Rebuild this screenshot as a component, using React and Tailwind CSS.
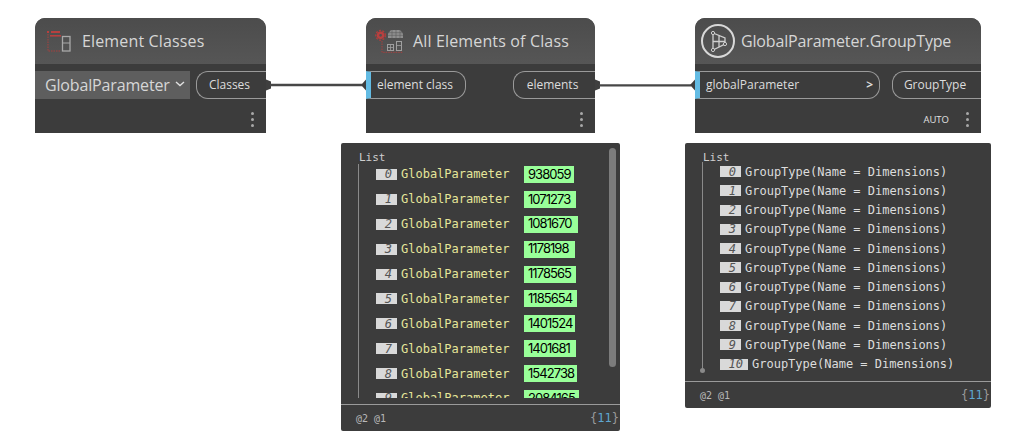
const sans = "font-['Open_Sans','Noto_Sans',sans-serif]";

function Dots({ className }) {
  return (
    <div className={"absolute flex flex-col gap-[3px] " + className}>
      <span className="w-[3px] h-[3px] rounded-full bg-[#a8a8a8]" />
      <span className="w-[3px] h-[3px] rounded-full bg-[#a8a8a8]" />
      <span className="w-[3px] h-[3px] rounded-full bg-[#a8a8a8]" />
    </div>
  );
}

function Header({ icon, title, track }) {
  return (
    <div className="h-[46px] flex items-center rounded-t-[10px] bg-gradient-to-b from-[#4c4c4c] to-[#565656]">
      {icon}
      <span className={"text-[16px] leading-none text-[#d6d6d6] " + track + " " + sans}>{title}</span>
    </div>
  );
}

function OutPort({ label, w }) {
  return (
    <div className={"h-[28px] flex items-center justify-center pr-[4px] rounded-l-[12px] border border-r-0 border-[#9a9a9a] text-[12px] text-[#dcdcdc] " + w + " " + sans}>
      {label}
    </div>
  );
}

function InPort({ label, w, arrow }) {
  return (
    <div className={"h-[28px] flex items-center justify-between border-y border-r border-[#9a9a9a] rounded-r-[12px] border-l-[5px] border-l-[#63bbe3] pl-[6px] pr-[6px] text-[12px] text-[#dcdcdc] " + w + " " + sans}>
      <span className="-mt-[1px]">{label}</span>
      {arrow && <span className="text-[12px] -mt-[1px] font-bold">&gt;</span>}
    </div>
  );
}

function IconClasses() {
  return (
    <svg width="30" height="26" viewBox="0 0 30 26" className="ml-[10px] mr-[7px] shrink-0">
      <g fill="#b8403f">
        <rect x="2" y="3" width="2" height="2" />
        <rect x="6" y="3" width="9" height="2" />
        <rect x="5" y="7" width="11" height="1.6" />
      </g>
      <path d="M3 6V23H16" stroke="#a8403f" strokeWidth="1" strokeDasharray="1.5 1" fill="none" />
      <rect x="17.5" y="8.5" width="7.5" height="14.5" fill="none" stroke="#a8a8a8" strokeWidth="1.3" />
      <path d="M17.5 15H25" stroke="#a8a8a8" strokeWidth="1" />
    </svg>
  );
}

function IconAll() {
  return (
    <svg width="32" height="28" viewBox="0 0 32 28" className="ml-[9px] mr-[6px] shrink-0">
      <circle cx="5.6" cy="8.3" r="2.6" fill="none" stroke="#b8403f" strokeWidth="2.4" />
      <circle cx="5.6" cy="8.3" r="4.8" fill="none" stroke="#b03c3b" strokeWidth="1.4" strokeDasharray="2 1.4" />
      <path d="M7 14V25.3H28" stroke="#a8403f" strokeWidth="1" strokeDasharray="1.5 1" fill="none" />
      <path d="M13 11V6.5L16 3H25L28 6.5V11Z" fill="#8f8f8f" />
      <path d="M13 5.7H28M13 8.3H28M17 3V11M21 3V11M25 3V11" stroke="#5c5c5c" strokeWidth="0.6" />
      <rect x="12.5" y="17.5" width="6" height="6" fill="none" stroke="#a0a0a0" strokeWidth="1" />
      <path d="M15.5 17.5V23.5M12.5 20.5H18.5" stroke="#a0a0a0" strokeWidth="0.8" />
      <rect x="21.5" y="14.5" width="5" height="9" fill="none" stroke="#a0a0a0" strokeWidth="1" />
      <path d="M21.5 18.5H26.5" stroke="#a0a0a0" strokeWidth="0.8" />
    </svg>
  );
}

function IconGlobal() {
  return (
    <svg width="36" height="36" viewBox="0 0 36 36" className="ml-[5px] mr-[5px] shrink-0">
      <circle cx="18" cy="18" r="16" fill="none" stroke="#d8d8d8" strokeWidth="2" />
      <path d="M13 10L25 15V21L13 27ZM19 12.5V24M13 18.5H25" fill="none" stroke="#d0d0d0" strokeWidth="1.3" />
      <circle cx="13" cy="10" r="1.6" fill="#4c4c4c" stroke="#d0d0d0" />
      <circle cx="13" cy="27" r="1.6" fill="#4c4c4c" stroke="#d0d0d0" />
      <circle cx="25" cy="21" r="1.6" fill="#4c4c4c" stroke="#d0d0d0" />
    </svg>
  );
}

function Wires() {
  return (
    <svg width="1016" height="100" className="absolute left-0 top-0" viewBox="0 0 1016 100">
      <g fill="#3f3f3f">
        <path d="M266 79.5L271 81.5V88.5L266 90.5Z" />
        <path d="M595 79.5L600 81.5V88.5L595 90.5Z" />
        <path d="M366 79.5L361 85L366 90.5Z" />
        <path d="M695 79.5L690 85L695 90.5Z" />
      </g>
      <path d="M270 85H362" stroke="#474747" strokeWidth="2.4" />
      <path d="M599 85.4H691" stroke="#474747" strokeWidth="2.4" />
    </svg>
  );
}

function Index({ n, wide }) {
  return (
    <span className={"shrink-0 flex items-center justify-end pr-[5px] h-[11px] bg-[#d9d9d9] text-[#555] italic text-[12px] " + (wide ? "w-[28px]" : "w-[21px]")}>
      {n}
    </span>
  );
}

const ids = ["938059", "1071273", "1081670", "1178198", "1178565", "1185654", "1401524", "1401681", "1542738", "2084165"];
const idWidths = ["w-[50px]", "w-[52px]", "w-[54px]", "w-[51px]", "w-[52px]", "w-[53px]", "w-[51px]", "w-[52px]", "w-[53px]", "w-[55px]"];

function Footer() {
  return (
    <div className="h-[27px] shrink-0 border-t border-[#9a9a9a] flex items-center justify-between pl-[15px] pr-[1px] text-[12px]">
      <span className="text-[10px] text-[#b8b8b8]">@2 @1</span>
      <span className="text-[#9a9a9a]">{"{"}<span className="text-[#5ea6d0]">11</span>{"}"}</span>
    </div>
  );
}

export default function App() {
  return (
    <div className="relative w-[1016px] h-[442px] bg-white overflow-hidden">
      <Wires />

      <div className="absolute left-[35px] top-[18px] w-[231px] h-[115px] bg-[#3c3c3c] rounded-t-[10px]">
        <Header icon={<IconClasses />} title="Element Classes" track="tracking-[0.15px]" />
        <div className="flex items-center gap-[6px] pt-[7px]">
          <div className={"w-[155px] h-[28px] bg-[#5e5e5e] flex items-center pl-[10px] text-[16px] tracking-[-0.15px] text-[#d6d6d6] " + sans}>
            <span>GlobalParameter</span>
            <svg width="10" height="6" viewBox="0 0 10 6" className="ml-[5px] -mt-[3px]"><path d="M1 1L5 4.5L9 1" fill="none" stroke="#e0e0e0" strokeWidth="1.4" /></svg>
          </div>
          <OutPort label="Classes" w="w-[70px]" />
        </div>
        <Dots className="right-[12px] top-[94px]" />
      </div>

      <div className="absolute left-[366px] top-[18px] w-[229px] h-[115px] bg-[#3c3c3c] rounded-t-[10px]">
        <Header icon={<IconAll />} title="All Elements of Class" track="tracking-[0.15px]" />
        <div className="flex items-center justify-between pt-[7px]">
          <InPort label="element class" w="w-[100px]" />
          <OutPort label="elements" w="w-[82px]" />
        </div>
        <Dots className="right-[12px] top-[94px]" />
      </div>

      <div className="absolute left-[695px] top-[18px] w-[286px] h-[115px] bg-[#3c3c3c] rounded-t-[10px]">
        <Header icon={<IconGlobal />} title="GlobalParameter.GroupType" track="tracking-[-0.16px]" />
        <div className="flex items-center justify-between pt-[7px]">
          <InPort label="globalParameter" w="w-[185px]" arrow />
          <OutPort label="GroupType" w="w-[89px]" />
        </div>
        <span className={"absolute right-[32px] top-[96px] text-[9.5px] leading-[12px] font-medium text-[#e0e0e0] " + sans}>AUTO</span>
        <Dots className="right-[12px] top-[94px]" />
      </div>

      <div className="absolute left-[341px] top-[143px] w-[279px] h-[288px] bg-[#3c3c3c] rounded-[2px] flex flex-col font-['DejaVu_Sans_Mono',monospace]">
        <div className="relative flex-1 min-h-0 pl-[18px] pt-[8px]">
          <div className="text-[11px] leading-[13px] text-[#cfcfcf]">List</div>
          <div className="border-l border-[#8a8a8a] ml-[-1px] pl-[17px] h-[234px] overflow-hidden">
            <div className="-mt-[2px] flex flex-col">
              {ids.map((id, i) => (
                <div key={id} className="h-[24.9px] shrink-0 flex items-center">
                  <Index n={i} />
                  <span className="ml-[4px] w-[123px] text-[12px] text-[#e6e69a] whitespace-pre">GlobalParameter</span>
                  <span className={"h-[17px] flex items-center pl-[4px] bg-[#99ff99] text-black font-['Inter',sans-serif] text-[13px] tracking-[-0.95px] " + idWidths[i]}>{id}</span>
                </div>
              ))}
            </div>
          </div>
          <div className="absolute right-[4px] top-[5px] w-[7px] h-[219px] rounded-full bg-[#7c7c7c]" />
        </div>
        <Footer />
      </div>

      <div className="absolute left-[685px] top-[143px] w-[306px] h-[265px] bg-[#3c3c3c] rounded-[2px] flex flex-col font-['DejaVu_Sans_Mono',monospace]">
        <div className="relative flex-1 min-h-0 pl-[18px] pt-[8px]">
          <div className="text-[11px] leading-[13px] text-[#cfcfcf]">List</div>
          <div className="relative border-l border-[#8a8a8a] ml-[-1px] pl-[17px] h-[209px]">
            <div className="-mt-[2px] flex flex-col">
              {Array.from({ length: 11 }, (_, i) => (
                <div key={i} className="h-[19.25px] shrink-0 flex items-center">
                  <Index n={i} wide={i === 10} />
                  <span className="ml-[4px] text-[12px] text-[#dcdcdc] whitespace-pre">GroupType(Name = Dimensions)</span>
                </div>
              ))}
            </div>
            <span className="absolute -left-[3px] -bottom-[2px] w-[5px] h-[5px] rounded-full bg-[#8a8a8a]" />
          </div>
        </div>
        <Footer />
      </div>
    </div>
  );
}
